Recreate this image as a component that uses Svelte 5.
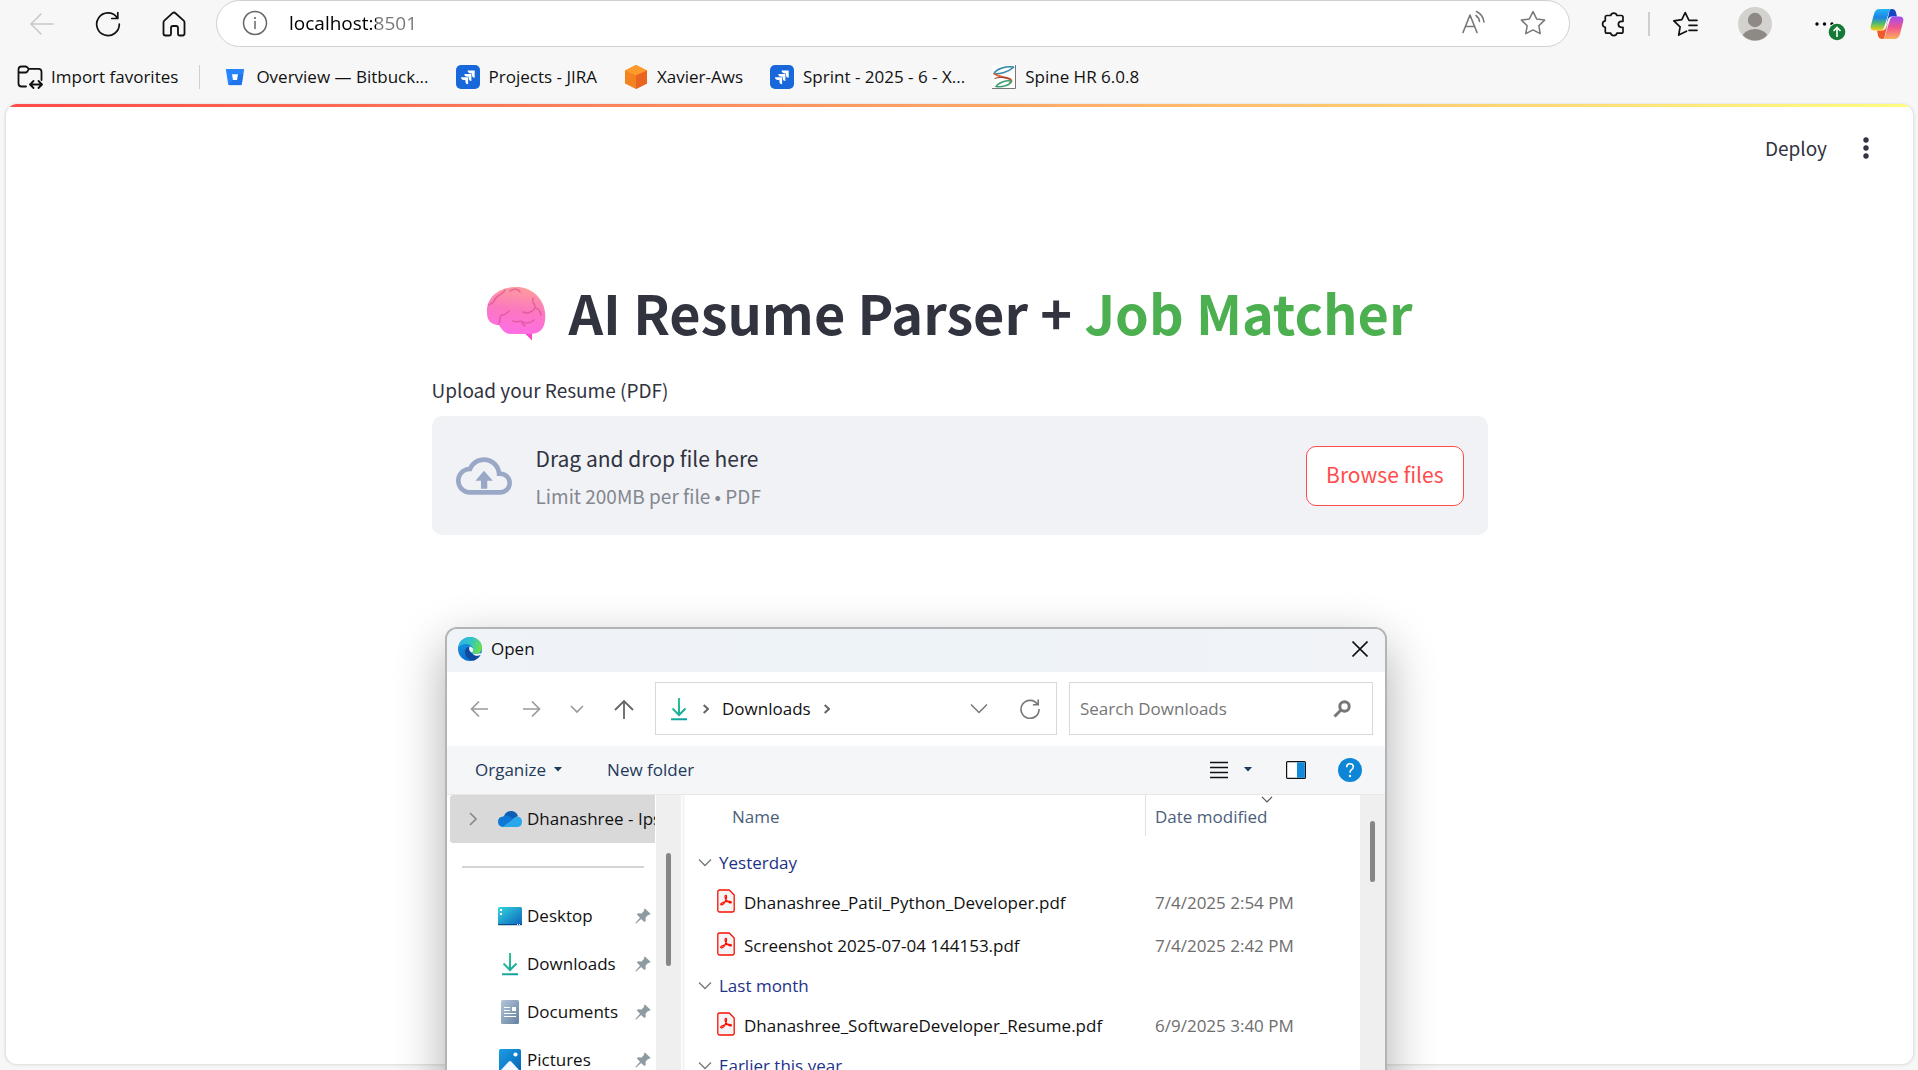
<script>
  const bookmarks = [
    { label: 'Overview — Bitbuck...', icon: 'bitbucket' },
    { label: 'Projects - JIRA', icon: 'jira' },
    { label: 'Xavier-Aws', icon: 'cube' },
    { label: 'Sprint - 2025 - 6 - X...', icon: 'jira' },
    { label: 'Spine HR 6.0.8', icon: 'spine' }
  ];

  const places = [
    { label: 'Desktop', icon: 'desktop' },
    { label: 'Downloads', icon: 'download' },
    { label: 'Documents', icon: 'document' },
    { label: 'Pictures', icon: 'picture' }
  ];

  const groups = [
    {
      label: 'Yesterday',
      files: [
        { name: 'Dhanashree_Patil_Python_Developer.pdf', date: '7/4/2025 2:54 PM' },
        { name: 'Screenshot 2025-07-04 144153.pdf', date: '7/4/2025 2:42 PM' }
      ]
    },
    {
      label: 'Last month',
      files: [{ name: 'Dhanashree_SoftwareDeveloper_Resume.pdf', date: '6/9/2025 3:40 PM' }]
    },
    { label: 'Earlier this year', files: [] }
  ];

  let address = $state('localhost:8501');
  let query = $state('');
</script>

{#snippet downloadIcon()}
  <svg width="24" height="24" viewBox="0 0 24 24" fill="none" stroke="url(#green)" stroke-width="2">
    <defs>
      <linearGradient id="green" gradientUnits="userSpaceOnUse" x1="4" y1="2" x2="20" y2="23">
        <stop offset="0" stop-color="#35cf8b" /><stop offset="1" stop-color="#0c9aa0" />
      </linearGradient>
    </defs>
    <path d="M12 1v17M5.500 11.500l6.500 6.500 6.500-6.500M4 22.200h16" />
  </svg>
{/snippet}

{#snippet placeIcon(name)}
  {#if name === 'desktop'}
    <svg width="24" height="24" viewBox="0 0 24 24">
      <defs>
        <linearGradient id="desk" x1="0" y1="0" x2="1" y2="1">
          <stop offset="0" stop-color="#35d6dc" /><stop offset="1" stop-color="#0b63bd" />
        </linearGradient>
      </defs>
      <rect y="3" width="24" height="18" rx="1.500" fill="url(#desk)" />
      <path d="M0 20h24v.5q0 .8-1 .8H1q-1 0-1-.8z" fill="#0a4a86" />
      <path d="M2 5h2v2H2zM2 9h2v2H2z" fill="#fff" />
      <path d="M19 20h1v1h-1zM21 20h1v1h-1z" fill="#fff" />
    </svg>
  {:else if name === 'download'}
    {@render downloadIcon()}
  {:else if name === 'document'}
    <svg width="24" height="24" viewBox="0 0 24 24">
      <defs>
        <linearGradient id="docu" x1="0" y1="0" x2="1" y2="1">
          <stop offset="0" stop-color="#b5c6da" /><stop offset="1" stop-color="#63809f" />
        </linearGradient>
      </defs>
      <rect x="3" width="18" height="24" rx="1.500" fill="url(#docu)" />
      <path d="M6 7.500h6M6 10.500h6M6 13.500h12M6 16.500h12" stroke="#fff" stroke-width="1.200" />
      <path d="M14 7h4v4h-4z" fill="#fff" />
    </svg>
  {:else}
    <svg width="24" height="24" viewBox="0 0 24 24">
      <defs>
        <linearGradient id="pict" x1="0" y1="0" x2="1" y2="1">
          <stop offset="0" stop-color="#1b9fe4" /><stop offset="1" stop-color="#0862b8" />
        </linearGradient>
      </defs>
      <rect x="1" y="1" width="22" height="22" rx="1.500" fill="url(#pict)" />
      <circle cx="17.500" cy="6.500" r="2.100" fill="#fff" />
      <path d="M2.500 22.500l8.300-9q1.200-1 2.400 0l8.300 9z" fill="#f2f8fd" />
    </svg>
  {/if}
{/snippet}

{#snippet bookmarkIcon(name)}
  {#if name === 'bitbucket'}
    <svg width="24" height="24" viewBox="0 0 24 24">
      <path d="M3.600 4h16.800q.8 0 .7.800l-2.300 14.400q-.1.800-.9.800H6.100q-.8 0-.9-.8L2.900 4.800q-.1-.8.700-.8z" fill="#2684ff" />
      <path d="M20.300 9.500H15l-1 5.500h-4l-4.600 5q.3.200.7.200h11.800q.8 0 .9-.8z" fill="#1766dc" opacity=".55" />
      <path d="M9 9.300h6l-1 5.700h-4z" fill="#fff" />
    </svg>
  {:else if name === 'jira'}
    <svg width="24" height="24" viewBox="0 0 24 24">
      <rect width="24" height="24" rx="5" fill="#1868db" />
      <g fill="#fff">
        <path d="M11.600 5.600H18.700v7.100c-1.900 0-2.700-1.200-2.700-2.800V8.400h-1.500c-1.700 0-2.900-1-2.900-2.800z" />
        <path d="M8.300 8.900h7.100V16c-1.900 0-2.700-1.200-2.700-2.800v-1.500h-1.500c-1.700 0-2.900-1-2.900-2.800z" />
        <path d="M5 12.200h7.100v7.100c-1.900 0-2.700-1.200-2.700-2.800V15H7.900c-1.700 0-2.900-1-2.900-2.800z" />
      </g>
    </svg>
  {:else if name === 'cube'}
    <svg width="24" height="24" viewBox="0 0 24 24">
      <path d="M12 0l11 5.500v13L12 24 1 18.500v-13z" fill="#f58220" />
      <path d="M12 0l11 5.500-11 5-11-5z" fill="#fc9a2c" />
      <path d="M23 5.500v13L12 24V10.500z" fill="#ea6320" />
    </svg>
  {:else}
    <svg width="24" height="24" viewBox="0 0 24 24" fill="none">
      <rect width="24" height="24" fill="#fdfdfb" />
      <path d="M0 23.500h23.500V0" stroke="#777" />
      <path d="M22 2C13 1 4 4 2 8.500c4 1 14-1 20-6.500" stroke="#2f87ab" stroke-width="1.600" />
      <path d="M2 8.500c3 2.500 9 3.500 13 4.500 4 1 6 3 3 5" stroke="#d9683c" stroke-width="2" />
      <path d="M2.500 13.500c4-1.500 12-1.500 16 1" stroke="#8c3a2d" />
      <path d="M19 16c-5-1-13 2-15 5.500 6 1 14-1 15-5.500z" stroke="#3f9d72" stroke-width="1.500" />
    </svg>
  {/if}
{/snippet}

{#snippet pin()}
  <svg width="16" height="16" viewBox="0 0 16 16" fill="#8f9ba3">
    <path d="M10 .5l5.500 5.300-1 1.200-1.300-.2-2.700 2.900.2 3.200-1.300 1.200-3.300-3.100L.9 15.700l-.6-.6L5 9.700 1.800 6.600 3.100 5.300l3.400.2 2.700-2.700L8.900 1.600z" />
  </svg>
{/snippet}

{#snippet pdf()}
  <svg class="pdf" width="18" height="24" viewBox="0 0 18 24">
    <path d="M2.500 1h9.700L17.200 6v15q0 2-2 2H2.800q-2 0-2-2V3q0-2 1.700-2z" fill="#f4f4f4" stroke="#fa0f00" stroke-width="1.300" />
    <path d="M4 15.800c-1.300-.6 1.200-2.600 4.600-3.200 2.700-.5 6.200-.2 5.800 1-.4 1.100-3.400-.4-4.900-2.200-1.500-1.900-2-5.100-.7-5.100 1.400 0 .7 3.500-.6 6.100-1.300 2.500-3 4.100-4.200 3.400z" fill="none" stroke="#fa0f00" stroke-width="1.200" />
  </svg>
{/snippet}

<div class="browser">
  <header class="toolbar">
    <div class="nav-buttons">
      <button aria-label="Back">
        <svg width="24" height="24" viewBox="0 0 24 24" fill="none" stroke="#c9c9c9" stroke-width="1.600" stroke-linecap="round" stroke-linejoin="round"><path d="M23 12H1M11 2L1 12l10 10" /></svg>
      </button>
      <button aria-label="Refresh">
        <svg width="26" height="26" viewBox="0 0 26 26" fill="none" stroke="#111" stroke-width="1.700" stroke-linecap="round" stroke-linejoin="round"><path d="M22 6.400A11.300 11.300 0 1 0 24.300 13M22.800 1.500v6h-6" /></svg>
      </button>
      <button aria-label="Home">
        <svg width="24" height="26" viewBox="0 0 24 26" fill="none" stroke="#111" stroke-width="1.800" stroke-linejoin="round"><path d="M1.500 11.400q0-1 .8-1.800l8.200-7.400q1.500-1.300 3 0l8.200 7.400q.8.800.8 1.800v11.200q0 1.900-1.900 1.900h-3.200q-1.400 0-1.400-1.500v-6q0-2-2-2h-3q-2 0-2 2v6q0 1.500-1.400 1.500H3.400q-1.900 0-1.900-1.900z" /></svg>
      </button>
    </div>
    <div class="address">
      <button aria-label="Site information">
        <svg width="26" height="26" viewBox="0 0 26 26" fill="none" stroke="#666" stroke-width="1.500"><circle cx="13" cy="13" r="11.500" /><path d="M13 11.500v7" stroke-linecap="round" /><circle cx="13" cy="8" r="1.100" fill="#666" stroke="none" /></svg>
      </button>
      <input class="url" aria-label="Address" bind:value={address} />
      <button aria-label="Read aloud">
        <svg width="26" height="26" viewBox="0 0 26 26" fill="none" stroke="#777" stroke-width="1.600" stroke-linecap="round" stroke-linejoin="round"><path d="M2 22.500L9 5l7 17.500M4.500 16.500h9M15 5.500q3 2.200 3.500 6M15.500 1.500q6.500 3 7.500 10.500" /></svg>
      </button>
      <button aria-label="Add to favorites">
        <svg width="26" height="26" viewBox="0 0 26 26" fill="none" stroke="#777" stroke-width="1.500" stroke-linejoin="round"><path d="M13 1.700l3.600 7.200 8 1.200-5.800 5.600 1.400 7.900L13 19.900l-7.200 3.700 1.400-7.900L1.400 10.100l8-1.200z" /></svg>
      </button>
    </div>
    <div class="tools">
      <button aria-label="Extensions">
        <svg width="24" height="26" viewBox="0 0 24 26" fill="none" stroke="#111" stroke-width="1.700" stroke-linejoin="round"><path d="M9.700 4.500a3.200 3.200 0 0 1 6.200 0h4.400q1.700 0 1.700 1.700v4.100h-1.600a3 3 0 0 0 0 6H22v4.200q0 1.700-1.700 1.700h-4.400a3.200 3.200 0 0 1-6.200 0H6q-1.700 0-1.700-1.700v-4.200a3.300 3.300 0 0 1 0-6.500V6.200q0-1.700 1.700-1.700z" /></svg>
      </button>
      <span class="rule"></span>
      <button aria-label="Favorites">
        <svg width="26" height="26" viewBox="0 0 26 26" fill="none" stroke="#111" stroke-width="1.700" stroke-linecap="round" stroke-linejoin="round"><path d="M14.500 20.200l-7.800 3.900 1.400-8.300-6.300-6 8-1.200 3.400-7 3.300 6.700M17 9.300h8M17 14.300h8M17 19.300h8" /></svg>
      </button>
      <button class="avatar" aria-label="Profile">
        <svg width="34" height="34" viewBox="0 0 34 34"><defs><clipPath id="disc"><circle cx="17" cy="17" r="16.500" /></clipPath></defs><circle cx="17" cy="17" r="17" fill="#d4d2ce" /><circle cx="17" cy="13" r="7.200" fill="#8e8984" /><ellipse cx="17" cy="31" rx="13" ry="9" fill="#8e8984" clip-path="url(#disc)" /></svg>
      </button>
      <button class="more" aria-label="Settings and more, update available">
        <svg width="32" height="34" viewBox="0 0 32 34"><circle cx="3" cy="17" r="1.700" /><circle cx="10.500" cy="17" r="1.700" /><circle cx="18" cy="17" r="1.700" /><circle cx="23" cy="25" r="9.300" fill="#f7f7f7" /><circle cx="23" cy="25" r="8.300" fill="#147a35" /><path d="M23 30v-9.500M19.500 24l3.500-3.500 3.500 3.500" fill="none" stroke="#fff" stroke-width="1.600" /></svg>
      </button>
      <button aria-label="Copilot">
        <svg width="34" height="32" viewBox="0 0 34 32">
          <defs>
            <linearGradient id="cpA" x1="0" y1="0" x2="0" y2="1"><stop offset="0" stop-color="#25b6f5" /><stop offset=".4" stop-color="#1a84e6" /><stop offset=".7" stop-color="#5cbf62" /><stop offset="1" stop-color="#f8cf10" /></linearGradient>
            <linearGradient id="cpB" x1="0" y1="0" x2="0" y2="1"><stop offset="0" stop-color="#a04ef0" /><stop offset=".5" stop-color="#f0568d" /><stop offset="1" stop-color="#ffb05a" /></linearGradient>
          </defs>
          <path d="M20 1h2.500q2.500 0 3.300 2.800L27 8.500h-5q-3 0-4 3l-2 6z" fill="#1746c4" />
          <path d="M14 31h-2.500q-2.500 0-3.300-2.800L7 22.500h5q3 0 4-3l2-5z" fill="#f0592b" />
          <path d="M9.500 1H22q-2.200.4-3 3l-5 15.500q-1 3-4 3H4.500Q0 22.500.7 18L4 6Q5.400 1 9.500 1z" fill="url(#cpA)" />
          <path d="M24.500 31H12q2.200-.4 3-3l5-16.500q1-3 4-3h5.500q4.500 0 3.800 4.500L30 26q-1.400 5-5.500 5z" fill="url(#cpB)" />
        </svg>
      </button>
    </div>
  </header>

  <nav class="bookmarks" aria-label="Favorites bar">
    <button class="bookmark import">
      <svg width="26" height="26" viewBox="0 0 26 26" fill="none" stroke="#111" stroke-width="1.800" stroke-linecap="round" stroke-linejoin="round"><path d="M9 22.500H4.500Q1.500 22.500 1.500 19.500v-14q0-3 3-3h4q1 0 1.800.8l1.500 1.500h9.700q3 0 3 3V16M1.500 8.500h7q1 0 1.800-.9l1.500-2.800M13.500 20.500h11M16.500 17l-3.500 3.500 3.500 3.500M21.500 17l3.500 3.500-3.500 3.500" /></svg>
      <span>Import favorites</span>
    </button>
    <span class="rule"></span>
    {#each bookmarks as b}
      <a class="bookmark" href="#top">{@render bookmarkIcon(b.icon)}<span>{b.label}</span></a>
    {/each}
  </nav>

  <main class="page" id="top">
    <div class="decoration"></div>
    <div class="app-bar">
      <button>Deploy</button>
      <button aria-label="Main menu">
        <svg width="6" height="22" viewBox="0 0 6 22" fill="#31333f"><circle cx="3" cy="3" r="2.700" /><circle cx="3" cy="11" r="2.700" /><circle cx="3" cy="19" r="2.700" /></svg>
      </button>
    </div>
    <section class="content">
      <h1>
        <svg width="60" height="56" viewBox="0 0 60 56" role="img" aria-label="Brain">
          <defs>
            <linearGradient id="brain" x1=".6" y1="0" x2=".45" y2="1"><stop offset="0" stop-color="#ff9c9b" /><stop offset=".5" stop-color="#fb78c0" /><stop offset="1" stop-color="#ff6de6" /></linearGradient>
          </defs>
          <path d="M37 47h9v7.500L37.500 46z" fill="#fb47c8" />
          <path d="M29 1C43 0 57 10 59 26c1 9-1 16-5 19-2 2-6 3-10 3H25c-6 0-9-4-12-9-5 0-12-2-12-12C0 12 12 1.500 29 1z" fill="url(#brain)" />
          <g fill="none" stroke="#dc4e93" stroke-width="1.500" stroke-linecap="round" opacity=".7">
            <path d="M3 19c2-2 4-1 5-4 2-6 9-6 11-11M24 5c3-3 9-2 10 1M47 12c-2 5 3 6 2 10-2 4-8 6-12 4M49 22c3 0 5 3 6 7M13 38c2-4-1-7 3-9 4 0 5-2 7-4M27 35c4 2 7-1 10 1s8 1 11-2M36 36c0 2 1 3 3 4" />
          </g>
        </svg>
        <span>AI Resume Parser + <em>Job Matcher</em></span>
      </h1>
      <p class="label" id="upload-label">Upload your Resume (PDF)</p>
      <div class="dropzone" role="group" aria-labelledby="upload-label">
        <svg width="56" height="56" viewBox="0 0 24 24" fill="#9aa8c7"><path d="M19.350 10.040A7.490 7.490 0 0 0 12 4C9.110 4 6.600 5.640 5.350 8.040A5.994 5.994 0 0 0 0 14c0 3.310 2.690 6 6 6h13c2.760 0 5-2.240 5-5 0-2.640-2.050-4.780-4.650-4.960zM19 18H6c-2.210 0-4-1.790-4-4s1.790-4 4-4h.71C7.370 7.690 9.480 6 12 6c3.040 0 5.500 2.460 5.500 5.500v.5H19c1.660 0 3 1.340 3 3s-1.340 3-3 3zM8.300 14h2.400v3.500h2.700V14h2.400L12 9.700z" /></svg>
        <div class="hint">
          <span class="lead">Drag and drop file here</span>
          <span class="limit">Limit 200MB per file • PDF</span>
        </div>
        <button class="browse">Browse files</button>
      </div>
    </section>
  </main>

  <div class="dialog" role="dialog" aria-labelledby="dialog-title">
    <div class="titlebar">
      <svg width="24" height="24" viewBox="0 0 24 24">
        <defs>
          <linearGradient id="edA" x1="0" y1=".2" x2="1" y2=".5"><stop offset="0" stop-color="#2cb2ee" /><stop offset=".5" stop-color="#2fc5c5" /><stop offset="1" stop-color="#6ae04c" /></linearGradient>
          <linearGradient id="edB" x1="0" y1="0" x2=".5" y2="1"><stop offset="0" stop-color="#1ba0e6" /><stop offset="1" stop-color="#0669c9" /></linearGradient>
        </defs>
        <circle cx="12" cy="12" r="12" fill="url(#edB)" />
        <path d="M.2 10.500C1.500 3.500 6.500 0 12 0c7 0 12 5 12 10.500 0 4.500-3.500 6.500-6.500 6.500-2 0-3.500-.6-3.300-1.300.2-.7 1-1.200 1-3C15.200 9.500 12 7 8 7 4 7 1 9 .2 10.500z" fill="url(#edA)" />
        <path d="M11.500 9.500C8 10.500 6.500 13 7 16c.7 4.500 4.500 7.500 9 7.400 3-1.200 5.300-3.300 6.500-5.600.2-.5-.2-.7-.7-.4-5.300 2.500-11.800-1.400-10.300-7.900z" fill="#114a9d" />
        <path d="M14.200 15.700c-2.500-.9-3.800-3.300-2.700-6.200 2 0 3.700 1.300 3.700 3.200 0 1.800-.8 2.300-1 3zM14.200 15.700c.5 1.400 4.800 1.800 8 .2l1.700 1.100c-3.500 3-8.500 2-9.700-1.300z" fill="#eff4f9" />
      </svg>
      <h2 id="dialog-title">Open</h2>
      <button aria-label="Close">
        <svg width="16" height="16" viewBox="0 0 16 16" stroke="#111" stroke-width="1.600"><path d="M.5.5l15 15M15.500.5l-15 15" /></svg>
      </button>
    </div>

    <div class="navrow">
      <div class="arrows">
        <button aria-label="Back"><svg width="18" height="18" viewBox="0 0 18 18" fill="none" stroke="#9b9b9b" stroke-width="1.700"><path d="M18 9H1.500M9 1.500L1.500 9 9 16.500" /></svg></button>
        <button aria-label="Forward"><svg width="18" height="18" viewBox="0 0 18 18" fill="none" stroke="#9b9b9b" stroke-width="1.700"><path d="M0 9h16.500M9 1.500L16.500 9 9 16.500" /></svg></button>
        <button class="narrow" aria-label="Recent locations"><svg width="14" height="18" viewBox="0 0 14 18" fill="none" stroke="#9b9b9b" stroke-width="1.700"><path d="M1 6l6 6 6-6" /></svg></button>
        <button class="up" aria-label="Up"><svg width="20" height="20" viewBox="0 0 20 20" fill="none" stroke="#666" stroke-width="1.800"><path d="M10 20V2M1 11l9-9 9 9" /></svg></button>
      </div>
      <div class="crumbs">
        {@render downloadIcon()}
        <svg width="6" height="12" viewBox="0 0 6 12" fill="none" stroke="#666" stroke-width="2"><path d="M.7 2L5 6 .7 10" /></svg>
        <a href="#downloads">Downloads</a>
        <svg width="6" height="12" viewBox="0 0 6 12" fill="none" stroke="#666" stroke-width="2"><path d="M.7 2L5 6 .7 10" /></svg>
        <span class="grow"></span>
        <button aria-label="Previous locations"><svg width="18" height="12" viewBox="0 0 18 12" fill="none" stroke="#777" stroke-width="1.500"><path d="M1 1.500l8 8 8-8" /></svg></button>
        <button aria-label="Refresh Downloads"><svg width="20" height="20" viewBox="0 0 20 20" fill="none" stroke="#777" stroke-width="1.600"><path d="M17.600 5.500A9 9 0 1 0 19 10M18.200.5v5.300h-5.300" /></svg></button>
      </div>
      <div class="search">
        <input type="search" aria-label="Search Downloads" placeholder="Search Downloads" bind:value={query} />
        <svg width="18" height="18" viewBox="0 0 18 18" fill="none" stroke="#777"><circle cx="11.500" cy="6.500" r="4.700" stroke-width="3" /><path d="M8 10l-6.500 6.500" stroke-width="3" /></svg>
      </div>
    </div>

    <div class="commands">
      <button>Organize <svg width="10" height="6" viewBox="0 0 10 6" fill="#1e395b"><path d="M1 0h8L5 4.500z" /></svg></button>
      <button>New folder</button>
      <span class="grow"></span>
      <button class="chip" aria-label="Details view"><svg width="20" height="18" viewBox="0 0 20 18" stroke="#111" stroke-width="1.300"><path d="M1 1.500h18M1 6.500h18M1 11.500h18M1 16.500h18" /></svg></button>
      <button aria-label="More view options"><svg width="10" height="6" viewBox="0 0 10 6" fill="#1e395b"><path d="M1 0h8L5 4.500z" /></svg></button>
      <button class="chip preview" aria-label="Show preview pane"><svg width="20" height="18" viewBox="0 0 20 18"><rect x=".6" y=".6" width="18.800" height="16.800" rx="1" fill="#fff" stroke="#111" stroke-width="1.200" /><path d="M11 1.200h7.800v15.600H11z" fill="#128adb" /></svg></button>
      <button aria-label="Help"><svg width="24" height="24" viewBox="0 0 24 24"><circle cx="12" cy="12" r="12" fill="#0d86d8" /><path d="M8.700 9.300q0-3.500 3.300-3.500t3.300 3q0 1.700-1.700 2.900-1.600 1.100-1.600 3" fill="none" stroke="#fff" stroke-width="1.600" /><circle cx="12" cy="18" r="1.200" fill="#fff" /></svg></button>
    </div>

    <div class="panes">
      <aside class="places">
        <div class="list">
          <a class="place current" href="#onedrive">
            <svg class="twist" width="8" height="14" viewBox="0 0 8 14" fill="none" stroke="#888" stroke-width="1.600"><path d="M1 1l6 6-6 6" /></svg>
            <svg width="24" height="24" viewBox="0 0 24 24"><path d="M5 12Q7 4 13 4q5 0 7 5l-8 5z" fill="#0a5fb4" /><path d="M4.500 20Q0 19 0 14.800 0 10 5.200 9.600q2-2 5.300-.7L20 14l-7 6z" fill="#0f78d4" /><path d="M4.500 20l10-7.500L19 9.200q5 .8 5 5.800 0 4.500-4.500 5z" fill="#29a7ea" /></svg>
            <span>Dhanashree - Ips</span>
          </a>
          <hr />
          {#each places as p}
            <a class="place" href="#{p.label}">{@render placeIcon(p.icon)}<span>{p.label}</span>{@render pin()}</a>
          {/each}
        </div>
        <div class="track"><div class="thumb side"></div></div>
      </aside>

      <div class="files">
        <table>
          <thead>
            <tr>
              <th class="name" scope="col">Name</th>
              <th scope="col">
                <div class="date-head">
                  Date modified
                  <svg class="sort" width="12" height="7" viewBox="0 0 12 7" fill="none" stroke="#555" stroke-width="1.200"><path d="M1 .8l5 5 5-5" /></svg>
                </div>
              </th>
            </tr>
          </thead>
          {#each groups as g}
            <tbody>
              <tr class="group">
                <th colspan="2" scope="rowgroup">
                  <button><svg width="14" height="10" viewBox="0 0 14 10" fill="none" stroke="#777" stroke-width="1.300"><path d="M1 1.500l6 6 6-6" /></svg>{g.label}</button>
                </th>
              </tr>
              {#each g.files as f}
                <tr class="file">
                  <td><div class="file-name">{@render pdf()}{f.name}</div></td>
                  <td class="date">{f.date}</td>
                </tr>
              {/each}
            </tbody>
          {/each}
        </table>
        <div class="track"><div class="thumb main"></div></div>
      </div>
    </div>
  </div>
</div>

<style>
  :global(body) {
    margin: 0;
    background: #f7f7f7;
  }
  .browser,
  .browser * {
    box-sizing: border-box;
  }
  .browser {
    --ui: 'Open Sans', 'Noto Sans', sans-serif;
    --app: 'Noto Sans CJK JP', 'Noto Sans', sans-serif;
    position: relative;
    display: flex;
    flex-direction: column;
    height: 100vh;
    overflow: hidden;
    background: #f7f7f7;
    color: #111;
    font: 17px/24px var(--ui);
  }
  svg {
    display: block;
    flex: none;
  }
  button,
  input {
    margin: 0;
    padding: 0;
    border: 0;
    background: none;
    color: inherit;
    font: inherit;
  }
  a {
    color: inherit;
    text-decoration: none;
  }
  .grow {
    flex: 1;
  }
  .rule {
    width: 1px;
    height: 24px;
    background: #cfcfcf;
  }

  .toolbar {
    display: flex;
    align-items: center;
    height: 47px;
    padding: 0 14px 0 30px;
  }
  .nav-buttons {
    display: flex;
    align-items: center;
    justify-content: space-between;
    width: 156px;
    margin-right: 30px;
  }
  .address {
    display: flex;
    flex: 1;
    align-items: center;
    height: 47px;
    padding: 0 23px 2px 25px;
    border: 1px solid #d0d0d0;
    border-radius: 24px;
    background: #fff;
  }
  .url {
    flex: 1;
    min-width: 0;
    margin-left: 21px;
    outline: none;
    font-size: 19px;
    background: linear-gradient(90deg, #000 87px, #767676 87px);
    background-clip: text;
    -webkit-background-clip: text;
    color: transparent;
  }
  .address button:last-child {
    margin-left: 33px;
  }
  .tools {
    display: flex;
    align-items: center;
    margin-left: 31px;
  }
  .tools .rule {
    margin: 0 22px 0 23px;
    width: 2px;
  }
  .avatar {
    margin-left: 40px;
  }
  .more {
    margin: 0 24px 0 42px;
  }

  .bookmarks {
    display: flex;
    align-items: center;
    gap: 27px;
    height: 57px;
    padding: 2px 17px 0;
  }
  .bookmarks .rule {
    margin: 0 -4px 0 -6px;
  }
  .bookmark {
    display: flex;
    align-items: center;
    gap: 9px;
    white-space: nowrap;
  }
  .import {
    gap: 8px;
  }

  .page {
    flex: 1;
    margin: 0 4px 5px 5px;
    overflow: hidden;
    border: 1px solid #e4e4e4;
    border-top: 0;
    border-radius: 12px;
    background: #fff;
    box-shadow: 0 0 3px rgba(0, 0, 0, 0.12);
    color: #31333f;
    font-family: var(--app);
  }
  .decoration {
    height: 3px;
    background: linear-gradient(90deg, #ff4b4b, #fffd80);
  }
  .app-bar {
    display: flex;
    align-items: center;
    justify-content: flex-end;
    gap: 36px;
    height: 82px;
    padding-right: 44px;
    font-size: 19px;
  }
  .content {
    width: 1056px;
    max-width: 100%;
    margin: 0 auto;
  }
  h1 {
    display: flex;
    align-items: center;
    justify-content: center;
    gap: 22px;
    height: 66px;
    margin: 92px 20px 0 0;
    font-size: 54px;
    line-height: 62px;
    font-weight: 700;
  }
  h1 span {
    padding-bottom: 4px;
  }
  h1 em {
    color: #4caf50;
    font-style: normal;
  }
  .label {
    margin: 31px 0 14px;
    font-size: 19px;
  }
  .dropzone {
    display: flex;
    align-items: center;
    gap: 24px;
    height: 119px;
    padding: 0 24px;
    border-radius: 10px;
    background: #f0f2f6;
  }
  .hint {
    display: flex;
    flex: 1;
    flex-direction: column;
    gap: 10px;
    padding-top: 2px;
    line-height: 28px;
  }
  .lead {
    font-size: 21px;
  }
  .limit {
    color: #85878f;
    font-size: 19px;
  }
  .browse {
    padding: 0 19px 3px;
    height: 60px;
    border: 1px solid #ff4b4b;
    border-radius: 10px;
    background: #fff;
    color: #ff4b4b;
    font-size: 21px;
  }

  .dialog {
    position: absolute;
    top: 627px;
    bottom: -120px;
    left: 445px;
    display: flex;
    flex-direction: column;
    width: 942px;
    overflow: hidden;
    border: 2px solid #b3b4b5;
    border-radius: 12px;
    background: #fff;
    box-shadow: 0 18px 50px rgba(0, 0, 0, 0.32);
  }
  .titlebar {
    display: flex;
    flex: none;
    align-items: center;
    gap: 9px;
    height: 43px;
    padding: 0 17px 3px 11px;
    background: linear-gradient(90deg, #f0f3f7, #edf3f8 50%, #f1f3f7);
  }
  h2 {
    flex: 1;
    margin: 0;
    font-size: 17px;
    font-weight: 400;
  }
  .navrow {
    display: flex;
    flex: none;
    align-items: center;
    height: 74px;
    padding: 0 12px 1px 23px;
  }
  .arrows {
    display: flex;
    align-items: center;
    width: 185px;
  }
  .arrows button {
    margin-right: 35px;
  }
  .arrows .narrow {
    margin: 0 30px 0 -6px;
  }
  .arrows .up {
    margin: 0;
  }
  .crumbs {
    display: flex;
    flex: 1;
    align-items: center;
    height: 53px;
    padding: 0 16px 0 11px;
    border: 1px solid #d9d9d9;
  }
  .crumbs a {
    margin: 0 13px;
  }
  .crumbs > svg:first-child {
    margin-right: 12px;
  }
  .crumbs button:last-child {
    margin-left: 32px;
  }
  .search {
    display: flex;
    align-items: center;
    width: 304px;
    height: 53px;
    margin-left: 12px;
    padding: 0 21px 0 10px;
    border: 1px solid #d9d9d9;
  }
  .search input {
    flex: 1;
    min-width: 0;
    outline: none;
    color: #333;
    appearance: none;
  }
  .search input::placeholder {
    color: #767676;
    opacity: 1;
  }
  .commands {
    display: flex;
    flex: none;
    align-items: center;
    height: 49px;
    padding: 0 23px 0 28px;
    border-bottom: 1px solid #e5e8eb;
    background: #f4f6f8;
    color: #1e395b;
  }
  .commands button {
    display: flex;
    align-items: center;
    gap: 7px;
    margin-left: 14px;
  }
  .commands button:first-child {
    margin: 0 30px 0 0;
  }
  .commands .preview {
    margin-left: 33px;
    margin-right: 18px;
  }
  .panes {
    display: flex;
    flex: 1;
    min-height: 0;
  }
  .places {
    display: flex;
    flex: none;
    width: 238px;
    border-right: 3px solid #f6f6f6;
    padding-left: 3px;
  }
  .list {
    width: 205px;
    overflow: hidden;
  }
  .place {
    display: flex;
    align-items: center;
    gap: 5px;
    height: 48px;
    padding: 0 4px 0 48px;
    white-space: nowrap;
  }
  .place span {
    flex: 1;
  }
  .current {
    padding-left: 19px;
    border-radius: 3px 0 0 3px;
    background: #d9d9d9;
  }
  .twist {
    margin-right: 16px;
  }
  hr {
    height: 2px;
    margin: 23px 11px 24px 12px;
    border: 0;
    background: #d4d4d4;
  }
  .track {
    width: 25px;
    margin-left: 1px;
    background: #efefef;
  }
  .thumb {
    width: 5px;
    margin-left: 10px;
    border-radius: 3px;
    background: #868686;
  }
  .side {
    height: 113px;
    margin-top: 58px;
  }
  .main {
    height: 61px;
    margin-top: 26px;
  }
  .files {
    display: flex;
    flex: 1;
    align-items: stretch;
  }
  table {
    flex: 1;
    align-self: flex-start;
    border-collapse: collapse;
    table-layout: fixed;
    text-align: left;
  }
  th,
  td {
    padding: 0;
    font-weight: 400;
  }
  thead th {
    height: 49px;
    color: #4c607a;
    vertical-align: top;
    line-height: 44px;
  }
  thead .name {
    width: 460px;
    padding-left: 47px;
  }
  .date-head {
    position: relative;
    height: 41px;
    padding-left: 9px;
    border-left: 1px solid #e2e2e2;
  }
  .sort {
    position: absolute;
    top: 1px;
    left: 115px;
  }
  .group th {
    height: 37px;
    padding-left: 13px;
    color: #1e3287;
  }
  .group button {
    display: flex;
    align-items: center;
    gap: 7px;
  }
  .file td {
    height: 43px;
    color: #111;
  }
  .file-name {
    display: flex;
    align-items: center;
    gap: 9px;
    padding-left: 32px;
  }
  .pdf {
    margin-bottom: 3px;
  }
  .file .date {
    padding-left: 10px;
    color: #6d6d6d;
  }
</style>
